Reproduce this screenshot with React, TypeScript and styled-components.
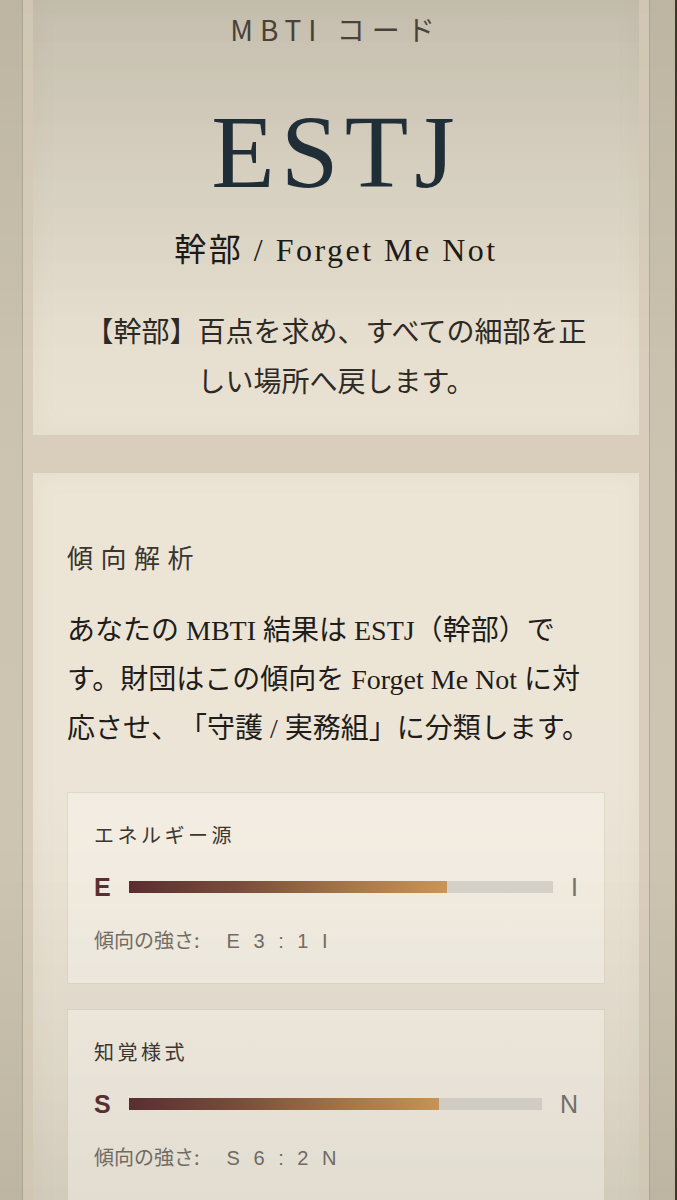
import styled, { createGlobalStyle } from "styled-components";

const GlobalStyle = createGlobalStyle`
  html, body {
    margin: 0;
    padding: 0;
    background: #cac2af;
  }
  body {
    font-family: "Noto Sans CJK JP", sans-serif;
    -webkit-font-smoothing: antialiased;
    text-spacing-trim: space-all;
  }
`;

const SERIF = `"Liberation Serif", "Noto Sans CJK JP", serif`;
const SANS = `"Noto Sans CJK JP", sans-serif`;

const Page = styled.div`
  min-height: 1200px;
  background: linear-gradient(180deg, #c4bca9 0%, #ccc4b1 40%, #cdc5b2 70%, #c3bba8 100%);
  padding: 0 25px 0 22px;
  border-right: 2px solid #3d382f;
  box-sizing: border-box;
`;

const Frame = styled.main`
  min-height: 1200px;
  border-left: 1px solid #b2aa97;
  border-right: 1px solid #b2aa97;
  background: #d8cebb;
  padding: 0 10px;
  display: flex;
  flex-direction: column;
  gap: 38px;
`;

const Card = styled.section<{ $tone: "top" | "bottom" }>`
  background: ${(p) =>
    p.$tone === "top"
      ? "linear-gradient(180deg, #ccc5b5 0%, #d9d2c2 35%, #e6dfcf 75%, #e9e2d3 100%)"
      : "linear-gradient(180deg, #ece5d6 0%, #ece5d7 40%, #e4ddce 75%, #d8d1c2 100%)"};
  box-shadow: inset 0 0 24px rgba(150, 135, 105, 0.08);
`;

const HeroCard = styled(Card)`
  padding: 9px 48px 27px;
  text-align: center;
`;

const Eyebrow = styled.div`
  font-family: ${SANS};
  font-size: 28px;
  line-height: 40px;
  letter-spacing: 7px;
  color: #4a4339;
`;

const Code = styled.h1`
  margin: 51px 0 0;
  font-family: ${SERIF};
  font-weight: 400;
  font-size: 104px;
  line-height: 104px;
  letter-spacing: 6px;
  color: #1f2e38;
`;

const Alias = styled.div`
  margin-top: 24px;
  font-family: ${SERIF};
  font-size: 32px;
  line-height: 44px;
  letter-spacing: 2.5px;
  color: #1e1a16;
`;

const Motto = styled.p`
  margin: 36px 0 0;
  font-family: ${SERIF};
  font-size: 28px;
  line-height: 50px;
  color: #2e2a25;
`;

const AnalysisCard = styled(Card)`
  padding: 66px 34px 40px;
`;

const SectionTitle = styled.h2`
  margin: 0;
  font-family: ${SANS};
  font-weight: 400;
  font-size: 26px;
  line-height: 36px;
  letter-spacing: 7.5px;
  color: #3b352e;
`;

const Body = styled.p`
  margin: 31px 0 0;
  font-family: ${SERIF};
  font-size: 28px;
  line-height: 49px;
  color: #1f1c19;
`;

const Meters = styled.div`
  margin-top: 39px;
  display: flex;
  flex-direction: column;
  gap: 25px;
`;

const Meter = styled.div`
  padding: 28px 26px 29px;
  background: rgba(247, 242, 233, 0.6);
  border: 1px solid rgba(190, 178, 155, 0.35);
  display: flex;
  flex-direction: column;
`;

const MeterTitle = styled.div`
  font-family: ${SANS};
  font-size: 20px;
  line-height: 28px;
  letter-spacing: 3.5px;
  color: #3d3630;
`;

const MeterRow = styled.div`
  margin-top: 24px;
  height: 28px;
  display: flex;
  align-items: center;
  gap: 18px;
`;

const Pole = styled.span<{ $lead?: boolean }>`
  font-family: "Liberation Sans", ${SANS};
  font-size: 25px;
  line-height: 28px;
  font-weight: ${(p) => (p.$lead ? 700 : 400)};
  color: ${(p) => (p.$lead ? "#5a2f30" : "#77716a")};
`;

const Track = styled.div`
  flex: 1;
  height: 12px;
  background: #d6d2ca;
  display: flex;
`;

const Fill = styled.div`
  height: 100%;
  background: linear-gradient(90deg, #5a2e31 0%, #7a4e3c 35%, #a87849 70%, #c9975a 100%);
`;

const Strength = styled.div`
  margin-top: 26px;
  font-family: ${SANS};
  font-size: 20px;
  line-height: 26px;
  color: #736d66;
  white-space: pre;
`;

const Ratio = styled.span`
  margin-left: 27px;
  font-family: "Liberation Sans", ${SANS};
  letter-spacing: 2px;
  word-spacing: 4px;
`;

const Shade = styled.div`
  position: fixed;
  inset: 0;
  pointer-events: none;
  background: linear-gradient(180deg, rgba(70, 60, 40, 0.05) 0%, rgba(70, 60, 40, 0) 30%, rgba(70, 60, 40, 0) 70%, rgba(70, 60, 40, 0.05) 100%);
`;

type AxisProps = {
  title: string;
  left: string;
  right: string;
  leftScore: number;
  rightScore: number;
};

function Axis(props: AxisProps) {
  const pct = (props.leftScore / (props.leftScore + props.rightScore)) * 100;
  return (
    <Meter>
      <MeterTitle>{props.title}</MeterTitle>
      <MeterRow>
        <Pole $lead>{props.left}</Pole>
        <Track>
          <Fill style={{ width: `${pct}%` }} />
        </Track>
        <Pole>{props.right}</Pole>
      </MeterRow>
      <Strength>
        傾向の強さ:
        <Ratio>{`${props.left} ${props.leftScore} : ${props.rightScore} ${props.right}`}</Ratio>
      </Strength>
    </Meter>
  );
}

export default function App() {
  return (
    <>
      <GlobalStyle />
      <Page lang="ja">
        <Frame>
          <HeroCard $tone="top">
            <Eyebrow>MBTI コード</Eyebrow>
            <Code>ESTJ</Code>
            <Alias>幹部 / Forget Me Not</Alias>
            <Motto>【幹部】百点を求め、すべての細部を正しい場所へ戻します。</Motto>
          </HeroCard>
          <AnalysisCard $tone="bottom">
            <SectionTitle>傾向解析</SectionTitle>
            <Body>
              あなたの MBTI 結果は ESTJ（幹部）です。財団はこの傾向を Forget Me Not
              に対応させ、「守護 / 実務組」に分類します。
            </Body>
            <Meters>
              <Axis title="エネルギー源" left="E" right="I" leftScore={3} rightScore={1} />
              <Axis title="知覚様式" left="S" right="N" leftScore={6} rightScore={2} />
            </Meters>
          </AnalysisCard>
        </Frame>
        <Shade />
      </Page>
    </>
  );
}
